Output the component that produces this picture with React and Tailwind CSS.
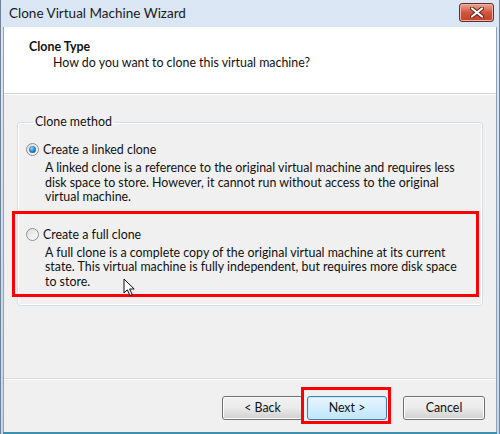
import React from 'react';

const font = { fontFamily: 'Lato, "Noto Sans", sans-serif' };

function Radio({ checked }) {
    return (
        <span className="relative mt-[1px] flex h-[13px] w-[13px] shrink-0 items-center justify-center rounded-full border border-[#8e8f8f] bg-gradient-to-br from-[#dcdcdc] to-[#ffffff]">
            {checked && (
                <span className="h-[7px] w-[7px] rounded-full bg-[radial-gradient(circle_at_40%_35%,#8fd0ff_0%,#1d7bc9_55%,#0b3f7a_100%)]" />
            )}
        </span>
    );
}

function Option({ checked, label, lines, children }) {
    return (
        <div className="relative">
            <div className="flex items-start gap-[4px] text-[12.4px] leading-[16px] text-[#111]">
                <Radio checked={checked} />
                <span className="whitespace-nowrap">{label}</span>
            </div>
            <p className="mt-[3px] pl-[19px] text-[12.4px] leading-[14.5px] text-[#111]">
                {lines.map((l, i) => (
                    <span key={i} className="block whitespace-nowrap">{l}</span>
                ))}
            </p>
            {children}
        </div>
    );
}

function Button({ children, primary }) {
    return (
        <button
            className={
                'h-[24px] w-full rounded-[3px] border text-[12.4px] text-[#111] ' +
                (primary
                    ? 'border-[#3c7fb1] bg-gradient-to-b from-[#eaf6fd] to-[#bee6fd] shadow-[inset_0_0_0_1px_#c6ebff]'
                    : 'border-[#707070] bg-gradient-to-b from-[#f2f2f2] via-[#ebebeb] to-[#cfcfcf] shadow-[inset_0_0_0_1px_#fcfcfc]')
            }
        >
            {children}
        </button>
    );
}

export default function App() {
    return (
        <div style={font} className="flex h-[434px] w-[500px] flex-col overflow-hidden border-x border-[#6f8296] bg-gradient-to-b from-[#dbe7f4] to-[#c3d6eb] px-[2px]">
            {/* title bar */}
            <div className="flex h-[27px] shrink-0 items-center justify-between pl-[6px] pr-[3px]">
                <span className="text-[13.5px] text-[#1a1a1a]">Clone Virtual Machine Wizard</span>
                <span className="mb-[2px] flex h-[19px] w-[35px] items-center justify-center rounded-[3px] border border-[#6b2b22] bg-gradient-to-b from-[#e9a597] via-[#d2553f] to-[#c2402a] shadow-[inset_0_0_0_1px_#efb1a4]">
                    <svg width="14" height="11" viewBox="0 0 14 11">
                        <path d="M2 1.5 L12 9.5 M12 1.5 L2 9.5" stroke="#5a2018" strokeWidth="4" strokeLinecap="round" />
                        <path d="M2 1.5 L12 9.5 M12 1.5 L2 9.5" stroke="#ffffff" strokeWidth="2.2" strokeLinecap="round" />
                    </svg>
                </span>
            </div>

            {/* client */}
            <div className="flex flex-1 flex-col border-x border-[#8ea2b6] bg-[#f0f0f0]">
                <div className="h-[67px] shrink-0 border-b border-[#d5d5d5] bg-white pl-[25px] pt-[12px] shadow-[0_1px_0_#ffffff]">
                    <h1 className="text-[12.4px] font-bold leading-[16px] text-[#111]">Clone Type</h1>
                    <p className="pl-[24px] text-[12.4px] leading-[16px] text-[#111]">How do you want to clone this virtual machine?</p>
                </div>

                <div className="flex-1 pt-[20px]">
                    <fieldset className="mx-[13px] rounded-[3px] border border-[#d5dfe5] pb-[16px] pl-[8px] shadow-[inset_0_0_0_1px_#ffffff]">
                        <legend className="ml-[7px] px-[2px] text-[12.4px] leading-[16px] text-[#111]">Clone method</legend>
                        <div className="mt-[12px]">
                            <Option
                                checked
                                label="Create a linked clone"
                                lines={[
                                    'A linked clone is a reference to the original virtual machine and requires less',
                                    'disk space to store. However, it cannot run without access to the original',
                                    'virtual machine.',
                                ]}
                            />
                        </div>
                        <div className="mt-[22px]">
                            <Option
                                label="Create a full clone"
                                lines={[
                                    'A full clone is a complete copy of the original virtual machine at its current',
                                    'state. This virtual machine is fully independent, but requires more disk space',
                                    'to store.',
                                ]}
                            >
                                <div className="pointer-events-none absolute left-[-14px] top-[-16px] h-[86px] w-[467px] border-[3px] border-[#ff0000]" />
                                <svg className="absolute left-[97px] top-[51px]" width="13" height="19" viewBox="0 0 13 19">
                                    <path d="M1 1 L1 15 L4.3 11.8 L7 17.5 L9.2 16.5 L6.6 11 L11.2 11 Z" fill="#ffffff" stroke="#111" strokeWidth="1" strokeLinejoin="round" />
                                </svg>
                            </Option>
                        </div>
                    </fieldset>
                </div>

                <div className="flex h-[54px] shrink-0 items-start justify-end border-t border-[#dadada] pr-[11px] pt-[15px] shadow-[inset_0_1px_0_#ffffff]">
                    <div className="w-[81px]">
                        <Button>&lt; Back</Button>
                    </div>
                    <div className="relative ml-[4px] w-[80px]">
                        <Button primary>Next &gt;</Button>
                        <div className="pointer-events-none absolute bottom-[-4px] left-[-6px] right-[-4px] top-[-7px] border-[3px] border-[#ff0000]" />
                    </div>
                    <div className="ml-[16px] w-[82px]">
                        <Button>Cancel</Button>
                    </div>
                </div>
            </div>
            <div className="h-[2px] shrink-0 bg-[#3f8fae]" />
        </div>
    );
}
